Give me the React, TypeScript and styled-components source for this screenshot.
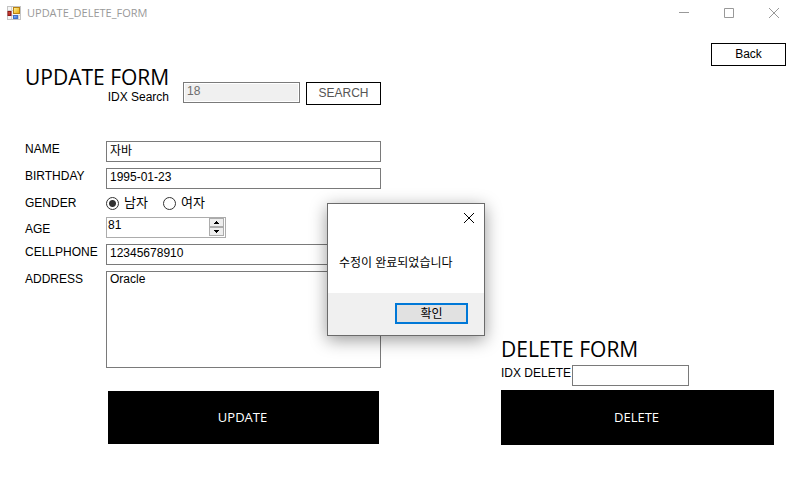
import React, { useState } from "react";
import styled, { createGlobalStyle } from "styled-components";

const formFont = `"Liberation Sans", "Noto Sans CJK KR", sans-serif`;
const uiFont = `"Open Sans", "Noto Sans CJK KR", sans-serif`;

const GlobalStyle = createGlobalStyle`
  * { box-sizing: border-box; }
  body { margin: 0; background: #fff; color: #000; font: 12px/17px ${formFont}; }
  button, input, textarea { font: inherit; color: inherit; margin: 0; border-radius: 0; }
`;

const TitleBar = styled.header`
  display: flex;
  align-items: center;
  height: 25px;
  padding-left: 7px;
  gap: 6px;
  color: #999;
`;

const Title = styled.h1`
  flex: 1;
  margin: 0;
  font: 11px/17px ${uiFont};
`;

const CaptionButtons = styled.div`
  display: flex;
`;

const CaptionButton = styled.button`
  width: 45px;
  height: 25px;
  padding: 0;
  border: 0;
  background: transparent;
  display: grid;
  place-items: center;
`;

const Main = styled.main`
  display: grid;
  grid-template-columns: minmax(0, 356fr) minmax(0, 285fr);
  column-gap: 120px;
  padding: 18px 10px 32px 25px;
`;

const UpdateForm = styled.form`
  padding: 21px 0 1px;
`;

const Heading = styled.h2`
  margin: 0;
  font: 21px/26px ${uiFont};
  white-space: nowrap;
`;

const SearchRow = styled.div`
  display: flex;
  align-items: flex-start;
`;

const SearchHeading = styled.div`
  display: flex;
  flex-direction: column;
  width: 144px;
  margin-right: 14px;
`;

const SearchLabel = styled.label`
  align-self: flex-end;
  line-height: 14px;
`;

const SearchControls = styled.div`
  display: flex;
  flex: 1;
  align-items: flex-start;
  gap: 6px;
  padding-top: 18px;
`;

const TextBox = styled.input`
  width: 100%;
  min-width: 0;
  height: 21px;
  padding: 0 3px 4px;
  border: 1px solid #7a7a7a;
  background: #fff;
  outline: 0;
  &:disabled {
    background: #f0f0f0;
    box-shadow: inset 0 0 0 1px #fff;
    color: #6d6d6d;
  }
`;

const OutlineButton = styled.button`
  width: 75px;
  height: 23px;
  flex: none;
  padding: 0 0 1px;
  border: 1px solid #000;
  background: #fff;
  &:disabled { color: #555; }
`;

const Fields = styled.div`
  display: grid;
  grid-template-columns: 81px minmax(0, 1fr);
  grid-template-rows: 21px 21px 16px 21px 21px 97px;
  row-gap: 6px;
  margin-top: 36px;
`;

const FieldLabel = styled.label<{ $low?: boolean }>`
  align-self: ${(p) => (p.$low ? "end" : "start")};
`;

const RadioGroup = styled.div`
  display: flex;
  align-items: center;
  gap: 15px;
`;

const RadioLabel = styled.label`
  display: flex;
  align-items: center;
  gap: 5px;
  font-size: 13px;
  line-height: 16px;
`;

const Radio = styled.input`
  appearance: none;
  width: 13px;
  height: 13px;
  border: 1px solid #333;
  && { border-radius: 50%; }
  &:checked { background: radial-gradient(circle, #333 0 3px, #fff 4px); }
`;

const Spinner = styled.div`
  display: flex;
  width: 120px;
  padding: 0 1px 1px 0;
  border: 1px solid #acacac;
`;

const SpinnerInput = styled.input`
  flex: 1;
  min-width: 0;
  padding: 0 2px 4px 1px;
  border: 0;
  outline: 0;
`;

const SpinnerButtons = styled.div`
  display: grid;
  grid-template-rows: 1fr 1fr;
  width: 15px;
`;

const SpinnerButton = styled.button`
  display: grid;
  place-items: center;
  min-height: 0;
  padding: 0;
  border: 1px solid #acacac;
  background: #eee;
`;

const Address = styled.textarea`
  display: block;
  width: 100%;
  height: 97px;
  padding: 0 3px;
  border: 1px solid #7a7a7a;
  line-height: 15px;
  resize: none;
  outline: 0;
`;

const ActionButton = styled.button`
  display: block;
  width: 100%;
  height: 55px;
  padding: 0 2px 2px 0;
  border: 0;
  background: #000;
  color: #fff;
  font: 13px/18px ${uiFont};
`;

const UpdateAction = styled.div`
  margin: 23px 2px 0 83px;
  ${ActionButton} { height: 53px; }
`;

const Side = styled.div`
  display: flex;
  flex-direction: column;
  justify-content: space-between;
  align-items: flex-end;
`;

const DeleteForm = styled.form`
  width: 100%;
  padding-right: 12px;
`;

const DeleteRow = styled.div`
  display: grid;
  grid-template-columns: 71px 117px;
  align-items: start;
  margin: 3px 0 4px;
  white-space: nowrap;
`;

const Dialog = styled.section`
  position: absolute;
  left: 327px;
  top: 203px;
  width: 158px;
  border: 1px solid #6b6b6b;
  background: #fff;
  box-shadow: 0 4px 16px rgba(0, 0, 0, 0.4);
`;

const DialogHeader = styled.div`
  display: flex;
  justify-content: flex-end;
`;

const DialogClose = styled.button`
  display: grid;
  place-items: center;
  width: 30px;
  height: 28px;
  padding: 0;
  border: 0;
  background: transparent;
`;

const Message = styled.p`
  margin: 0;
  padding: 22px 11px;
  font: 12px/17px ${uiFont};
  white-space: nowrap;
`;

const DialogFooter = styled.div`
  display: flex;
  justify-content: flex-end;
  padding: 10px 16px 11px;
  background: #f0f0f0;
`;

const OkButton = styled.button`
  width: 73px;
  height: 21px;
  padding: 0;
  border: 2px solid #0078d7;
  background: #e1e1e1;
  font: 12px/16px ${uiFont};
`;

const FormIcon = () => (
  <svg width="14" height="14" viewBox="0 0 14 14" aria-hidden="true">
    <defs>
      <linearGradient id="gold" x2="1" y2="1">
        <stop stopColor="#fff3a0" /><stop offset="1" stopColor="#e8a800" />
      </linearGradient>
      <linearGradient id="red" x2="1" y2="1">
        <stop stopColor="#f06a50" /><stop offset="1" stopColor="#9c0c0c" />
      </linearGradient>
      <linearGradient id="blue" x2="1" y2="1">
        <stop stopColor="#9cc4ff" /><stop offset="1" stopColor="#2a62d0" />
      </linearGradient>
    </defs>
    <rect x=".5" y=".5" width="13" height="13" fill="#f5f5f5" stroke="#c4c4c4" />
    <path d="M1 4.5h5M4.5 1v12M5 9.5h8M11.5 9v4" stroke="#d0d0d0" />
    <rect x="6.5" y="1.5" width="6" height="6" fill="url(#gold)" stroke="#b98112" />
    <rect x="1" y="5.5" width="3" height="4" fill="url(#red)" stroke="#8d1717" />
    <rect x="6.5" y="9.5" width="4" height="3" fill="url(#blue)" stroke="#3d6fc7" />
  </svg>
);

const Cross = () => (
  <svg width="10" height="10" viewBox="0 0 10 10" stroke="currentColor" aria-hidden="true">
    <path d="M0 0l10 10M10 0L0 10" />
  </svg>
);

const Arrow = ({ up }: { up?: boolean }) => (
  <svg width="5" height="3" viewBox="0 0 5 3" shapeRendering="crispEdges" aria-hidden="true">
    <path d={up ? "M2 0h1v1h1v1h1v1H0V2h1V1h1z" : "M0 0h5v1H4v1H3v1H2V2H1V1H0z"} />
  </svg>
);

export default function App() {
  const [age, setAge] = useState(81);
  const [open, setOpen] = useState(true);
  const stop = (e: React.FormEvent) => e.preventDefault();

  return (
    <>
      <GlobalStyle />
      <TitleBar>
        <FormIcon />
        <Title>UPDATE_DELETE_FORM</Title>
        <CaptionButtons>
          <CaptionButton aria-label="Minimize">
            <svg width="10" height="10" stroke="#999"><path d="M0 4.5h10" /></svg>
          </CaptionButton>
          <CaptionButton aria-label="Maximize">
            <svg width="10" height="10" stroke="#999" fill="none"><path d="M.5 .5h9v9h-9z" /></svg>
          </CaptionButton>
          <CaptionButton aria-label="Close"><Cross /></CaptionButton>
        </CaptionButtons>
      </TitleBar>
      <Main>
        <UpdateForm onSubmit={stop}>
          <SearchRow>
            <SearchHeading>
              <Heading>UPDATE FORM</Heading>
              <SearchLabel htmlFor="search">IDX Search</SearchLabel>
            </SearchHeading>
            <SearchControls>
              <TextBox id="search" defaultValue="18" disabled />
              <OutlineButton type="button" disabled>SEARCH</OutlineButton>
            </SearchControls>
          </SearchRow>
          <Fields>
            <FieldLabel htmlFor="name">NAME</FieldLabel>
            <TextBox id="name" defaultValue="자바" />
            <FieldLabel htmlFor="birthday">BIRTHDAY</FieldLabel>
            <TextBox id="birthday" defaultValue="1995-01-23" />
            <FieldLabel as="span" id="gender">GENDER</FieldLabel>
            <RadioGroup role="radiogroup" aria-labelledby="gender">
              <RadioLabel><Radio type="radio" name="gender" defaultChecked />남자</RadioLabel>
              <RadioLabel><Radio type="radio" name="gender" />여자</RadioLabel>
            </RadioGroup>
            <FieldLabel htmlFor="age" $low>AGE</FieldLabel>
            <Spinner>
              <SpinnerInput
                id="age"
                inputMode="numeric"
                value={age}
                onChange={(e) => setAge(Number(e.target.value) || 0)}
              />
              <SpinnerButtons>
                <SpinnerButton type="button" aria-label="Increase age" onClick={() => setAge(age + 1)}>
                  <Arrow up />
                </SpinnerButton>
                <SpinnerButton type="button" aria-label="Decrease age" onClick={() => setAge(age - 1)}>
                  <Arrow />
                </SpinnerButton>
              </SpinnerButtons>
            </Spinner>
            <FieldLabel htmlFor="cellphone">CELLPHONE</FieldLabel>
            <TextBox id="cellphone" defaultValue="12345678910" />
            <FieldLabel htmlFor="address">ADDRESS</FieldLabel>
            <Address id="address" defaultValue="Oracle" />
          </Fields>
          <UpdateAction>
            <ActionButton type="submit">UPDATE</ActionButton>
          </UpdateAction>
        </UpdateForm>
        <Side>
          <OutlineButton type="button">Back</OutlineButton>
          <DeleteForm onSubmit={stop}>
            <Heading>DELETE FORM</Heading>
            <DeleteRow>
              <label htmlFor="delete">IDX DELETE</label>
              <TextBox id="delete" />
            </DeleteRow>
            <ActionButton type="submit">DELETE</ActionButton>
          </DeleteForm>
        </Side>
      </Main>
      {open && (
        <Dialog role="dialog" aria-describedby="message">
          <DialogHeader>
            <DialogClose aria-label="Close message" onClick={() => setOpen(false)}><Cross /></DialogClose>
          </DialogHeader>
          <Message id="message">수정이 완료되었습니다</Message>
          <DialogFooter>
            <OkButton onClick={() => setOpen(false)}>확인</OkButton>
          </DialogFooter>
        </Dialog>
      )}
    </>
  );
}
